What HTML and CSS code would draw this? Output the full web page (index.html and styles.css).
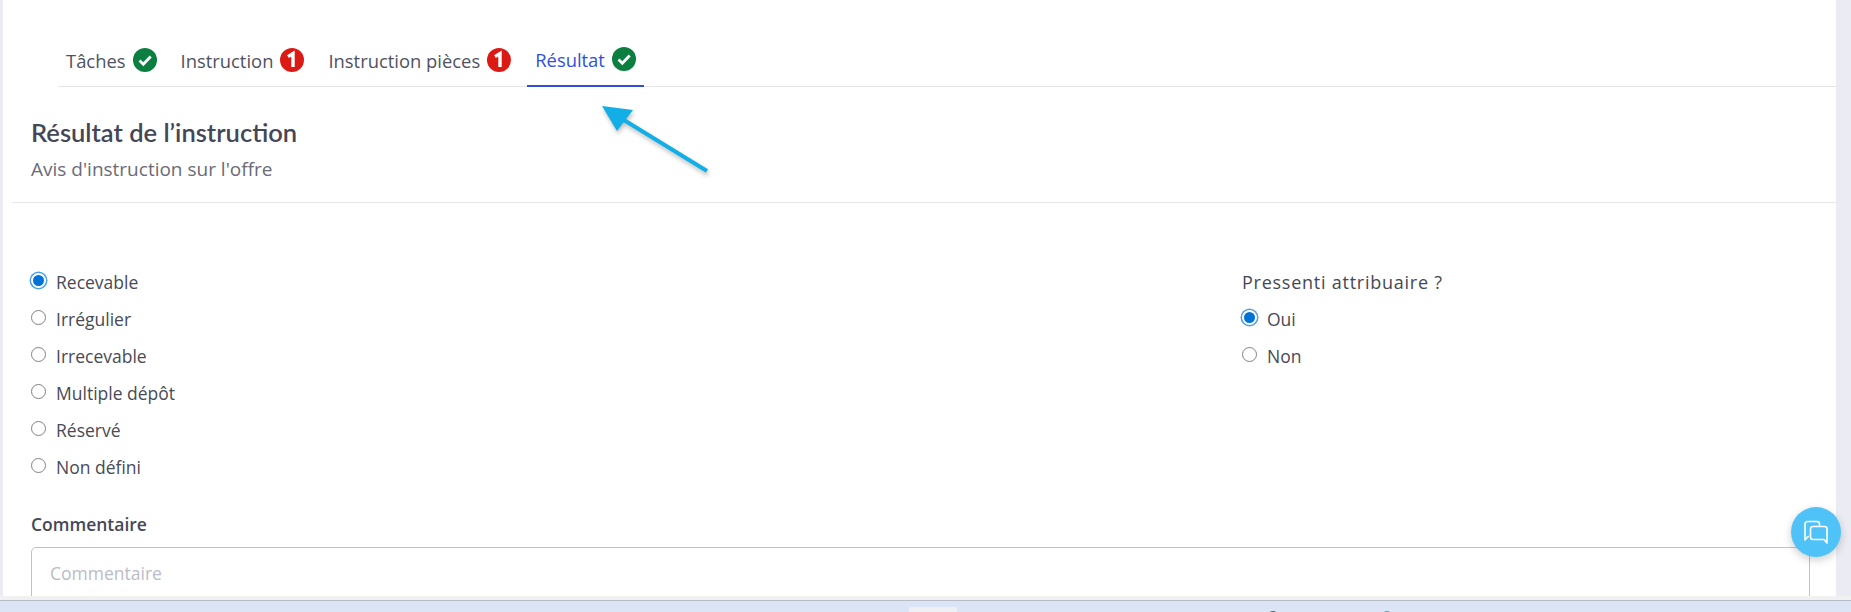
FILE: index.html
```html
<!DOCTYPE html>
<html lang="fr">
<head>
  <meta charset="UTF-8">
  <title>Résultat de l'instruction</title>
  <link rel="stylesheet" href="styles.css">
</head>
<body>

  <main class="page">
    <nav class="tabs">
      <a class="tab">Tâches
        <svg class="badge" viewBox="0 0 24 24"><circle cx="12" cy="12" r="12" fill="#0b7f3f"/><path d="M6.5 12.500l3.800 3.800 7.400-7.800" fill="none" stroke="#fff" stroke-width="2.800"/></svg>
      </a>
      <a class="tab">Instruction
        <svg class="badge" viewBox="0 0 24 24"><circle cx="12" cy="12" r="12" fill="#dc1a14"/><path d="M8 8.600l5-3.100v13.500" fill="none" stroke="#fff" stroke-width="3.400"/></svg>
      </a>
      <a class="tab">Instruction pièces
        <svg class="badge" viewBox="0 0 24 24"><circle cx="12" cy="12" r="12" fill="#dc1a14"/><path d="M8 8.600l5-3.100v13.500" fill="none" stroke="#fff" stroke-width="3.400"/></svg>
      </a>
      <a class="tab active">Résultat
        <svg class="badge" viewBox="0 0 24 24"><circle cx="12" cy="12" r="12" fill="#0b7f3f"/><path d="M6.5 12.500l3.800 3.800 7.400-7.800" fill="none" stroke="#fff" stroke-width="2.800"/></svg>
      </a>
    </nav>

    <section class="intro">
      <h2>Résultat de l’instruction</h2>
      <p>Avis d'instruction sur l'offre</p>
    </section>

    <form class="form">
      <div class="columns">
        <div class="col-left">
          <label class="radio"><input type="radio" name="avis" checked>Recevable</label>
          <label class="radio"><input type="radio" name="avis">Irrégulier</label>
          <label class="radio"><input type="radio" name="avis">Irrecevable</label>
          <label class="radio"><input type="radio" name="avis">Multiple dépôt</label>
          <label class="radio"><input type="radio" name="avis">Réservé</label>
          <label class="radio"><input type="radio" name="avis">Non défini</label>
        </div>
        <div class="col-right">
          <div class="field-label question">Pressenti attribuaire ?</div>
          <label class="radio"><input type="radio" name="pressenti" checked>Oui</label>
          <label class="radio"><input type="radio" name="pressenti">Non</label>
        </div>
      </div>
      <label class="field-label comment-label" for="commentaire">Commentaire</label>
      <textarea id="commentaire" class="comment" placeholder="Commentaire"></textarea>
    </form>

    <svg class="arrow" width="130" height="90" viewBox="0 0 130 90">
      <path d="M118 76L30 22" stroke="#12aee6" stroke-width="4" fill="none"/>
      <polygon points="13,11 44,15 28,36" fill="#12aee6"/>
    </svg>

    <button class="chat" type="button">
      <svg width="26" height="26" viewBox="0 0 26 26" fill="none" stroke="#fff" stroke-width="1.600" stroke-linejoin="round">
        <path d="M6 17.500H5l-3 3.500V5a2.500 2.500 0 0 1 2.500-2.500h9.500a2.500 2.500 0 0 1 2.500 2.500v2.500"/>
        <path d="M10 7.500h11.500a2.500 2.500 0 0 1 2.500 2.500v14l-3-3.500H10a2.500 2.500 0 0 1-2.500-2.500v-8A2.500 2.500 0 0 1 10 7.500z"/>
      </svg>
    </button>
  </main>

  <footer class="taskbar">
    <span class="task-tab"></span>
    <span class="task-dot green"></span>
    <span class="task-dot blue"></span>
  </footer>

</body>
</html>
```

FILE: styles.css
```css
html, body {
  height: 100%;
}
body {
  margin: 0;
  overflow: hidden;
  background: #ebebf3;
  font-family: 'Open Sans', sans-serif;
  color: #4a4b57;
  display: flex;
  flex-direction: column;
}
.page {
  position: relative;
  height: 596px;
  flex: none;
  margin: 0 15px 0 3px;
  background: #fff;
}
.tabs {
  display: flex;
  gap: 8px;
  height: 87px;
  box-sizing: border-box;
  margin-left: 55px;
  padding-top: 44px;
  border-bottom: 1px solid #e3e3e8;
}
.tab {
  display: flex;
  align-items: center;
  gap: 7px;
  height: 42px;
  margin-top: -5px;
  padding: 0 8px;
  box-sizing: border-box;
  font-size: 18.400px;
  font-weight: 500;
  color: #50515f;
  white-space: nowrap;
}
.tab.active {
  color: #2f50dc;
  border-bottom: 2px solid #2f50dc;
  height: 48px;
  padding-bottom: 6px;
}
.badge {
  width: 24px;
  height: 24px;
  flex: none;
}
.intro {
  margin-left: 9px;
  height: 116px;
  box-sizing: border-box;
  padding: 30px 0 0 19px;
  border-bottom: 1px solid #e6e6ea;
}
.intro h2 {
  margin: 0;
  font-family: 'Lato', sans-serif;
  font-size: 25.500px;
  line-height: 30px;
  font-weight: 600;
  color: #454757;
}
.intro p {
  margin: 11px 0 0;
  font-size: 19px;
  line-height: 22px;
  color: #6a6b78;
}
.form {
  height: 393px;
  box-sizing: border-box;
  overflow: hidden;
  padding: 60px 26px 0 28px;
}
.columns {
  display: flex;
}
.col-left {
  width: 1211px;
}
.radio {
  display: flex;
  align-items: center;
  height: 37px;
  font-size: 17.500px;
  color: #494a55;
}
.radio input {
  appearance: none;
  flex: none;
  box-sizing: border-box;
  width: 15px;
  height: 15px;
  margin: 0 10px 3px 0;
  border: 1.500px solid #80808a;
  border-radius: 50%;
  background: #fff;
}
.radio input:checked {
  border: 2px solid #fff;
  background: #0072d8;
  box-shadow: 0 0 0 1.500px #4d9fe8;
}
.field-label {
  display: block;
  height: 37px;
  line-height: 37px;
  font-size: 17.500px;
  font-weight: 600;
  color: #454757;
}
.question {
  padding-top: 1px;
  height: 36px;
  font-size: 18px;
  font-weight: 500;
  letter-spacing: 0.750px;
}
.comment-label {
  margin-top: 21px;
}
.comment {
  display: block;
  width: 100%;
  height: 110px;
  box-sizing: border-box;
  margin-top: 4px;
  padding: 13px 18px;
  border: 1px solid #c0c2ca;
  border-radius: 5px;
  font-family: 'Open Sans', sans-serif;
  font-size: 17.500px;
  resize: none;
  outline: none;
}
.comment::placeholder {
  color: #b9bcc8;
}
.arrow {
  position: absolute;
  left: 586px;
  top: 95px;
  filter: drop-shadow(1px 3px 2px rgba(0, 0, 0, 0.25));
}
.chat {
  position: absolute;
  left: 1788px;
  top: 507px;
  width: 50px;
  height: 50px;
  padding: 0;
  display: flex;
  align-items: center;
  justify-content: center;
  border: none;
  border-radius: 50%;
  background: #4fc3f7;
  box-shadow: 0 3px 8px rgba(0, 0, 0, 0.2);
  z-index: 2;
}
.taskbar {
  flex: 1;
  position: relative;
  z-index: 3;
  display: flex;
  align-items: flex-start;
  padding-top: 11px;
  background: linear-gradient(#f1f1f1 0 4px, #b9bcc6 4px 5px, #dbe5f6 5px, #dbe5f6);
  box-sizing: border-box;
  overflow: hidden;
}
.task-tab {
  width: 48px;
  height: 6px;
  margin-left: 909px;
  border-radius: 3px 3px 0 0;
  background: #eef0f6;
}
.task-dot {
  width: 8px;
  height: 8px;
  margin-top: 4px;
  border-radius: 50%;
}
.task-dot.green {
  margin-left: 312px;
  background: #1a8a3c;
}
.task-dot.blue {
  margin-left: 106px;
  background: #35a4e8;
}
```
